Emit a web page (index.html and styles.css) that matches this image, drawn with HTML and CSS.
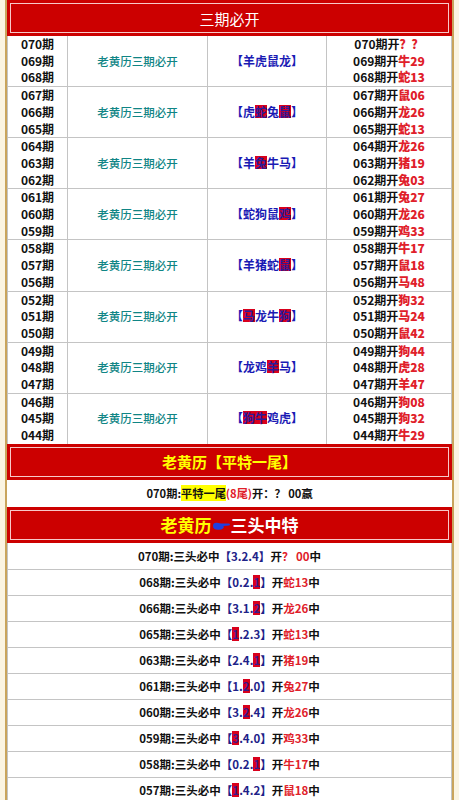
FILE: index.html
```html
<!DOCTYPE html>
<html lang="zh">
<head>
<meta charset="utf-8">
<title>三期必开</title>
<link rel="stylesheet" href="styles.css">
</head>
<body>
<div class="wrap">
  <div class="hd hd-plain">三期必开</div>
  <div class="tbl">
    <div class="grp">
      <div class="c c1">070期<br>069期<br>068期</div>
      <div class="c c2">老黄历三期必开</div>
      <div class="c c3">【羊虎鼠龙】</div>
      <div class="c c4">070期开<b>？？</b><br>069期开<b>牛29</b><br>068期开<b>蛇13</b></div>
    </div>
    <div class="grp">
      <div class="c c1">067期<br>066期<br>065期</div>
      <div class="c c2">老黄历三期必开</div>
      <div class="c c3">【虎<span class="hl">蛇</span>兔<span class="hl">鼠</span>】</div>
      <div class="c c4">067期开<b>鼠06</b><br>066期开<b>龙26</b><br>065期开<b>蛇13</b></div>
    </div>
    <div class="grp">
      <div class="c c1">064期<br>063期<br>062期</div>
      <div class="c c2">老黄历三期必开</div>
      <div class="c c3">【羊<span class="hl">兔</span>牛马】</div>
      <div class="c c4">064期开<b>龙26</b><br>063期开<b>猪19</b><br>062期开<b>兔03</b></div>
    </div>
    <div class="grp">
      <div class="c c1">061期<br>060期<br>059期</div>
      <div class="c c2">老黄历三期必开</div>
      <div class="c c3">【蛇狗鼠<span class="hl">鸡</span>】</div>
      <div class="c c4">061期开<b>兔27</b><br>060期开<b>龙26</b><br>059期开<b>鸡33</b></div>
    </div>
    <div class="grp">
      <div class="c c1">058期<br>057期<br>056期</div>
      <div class="c c2">老黄历三期必开</div>
      <div class="c c3">【羊猪蛇<span class="hl">鼠</span>】</div>
      <div class="c c4">058期开<b>牛17</b><br>057期开<b>鼠18</b><br>056期开<b>马48</b></div>
    </div>
    <div class="grp">
      <div class="c c1">052期<br>051期<br>050期</div>
      <div class="c c2">老黄历三期必开</div>
      <div class="c c3">【<span class="hl">马</span>龙牛<span class="hl">狗</span>】</div>
      <div class="c c4">052期开<b>狗32</b><br>051期开<b>马24</b><br>050期开<b>鼠42</b></div>
    </div>
    <div class="grp">
      <div class="c c1">049期<br>048期<br>047期</div>
      <div class="c c2">老黄历三期必开</div>
      <div class="c c3">【龙鸡<span class="hl">羊</span>马】</div>
      <div class="c c4">049期开<b>狗44</b><br>048期开<b>虎28</b><br>047期开<b>羊47</b></div>
    </div>
    <div class="grp">
      <div class="c c1">046期<br>045期<br>044期</div>
      <div class="c c2">老黄历三期必开</div>
      <div class="c c3">【<span class="hl">狗</span><span class="hl">牛</span>鸡虎】</div>
      <div class="c c4">046期开<b>狗08</b><br>045期开<b>狗32</b><br>044期开<b>牛29</b></div>
    </div>
  </div>

  <div class="hd hd-yel">老黄历【平特一尾】</div>
  <div class="line">070期:<span class="yb">平特一尾</span><span class="red">(8尾)</span>开：？ 00嬴</div>

  <div class="hd hd-big"><span class="yl">老黄历</span><svg class="hand" width="19" height="10" viewBox="0 0 19 10"><path d="M1 5 Q1 1.5 5 1.8 L9 2.6 L17 2.4 Q19 3.4 17 4.6 L11.5 5 Q12.5 6.4 11 7.4 Q9.5 9 6 8.8 Q1 8.8 1 5 Z" fill="#1f3fe0"/></svg><span class="wt">三头中特</span></div>
  <div class="rows">
    <div class="r">070期:三头必中<span class="nv">【3.2.4】</span>开<span class="red">？ 00</span>中</div>
    <div class="r">068期:三头必中<span class="nv">【0.2.<span class="hd2">1</span>】</span>开<span class="red">蛇13</span>中</div>
    <div class="r">066期:三头必中<span class="nv">【3.1.<span class="hd2">2</span>】</span>开<span class="red">龙26</span>中</div>
    <div class="r">065期:三头必中<span class="nv">【<span class="hd2">1</span>.2.3】</span>开<span class="red">蛇13</span>中</div>
    <div class="r">063期:三头必中<span class="nv">【2.4.<span class="hd2">1</span>】</span>开<span class="red">猪19</span>中</div>
    <div class="r">061期:三头必中<span class="nv">【1.<span class="hd2">2</span>.0】</span>开<span class="red">兔27</span>中</div>
    <div class="r">060期:三头必中<span class="nv">【3.<span class="hd2">2</span>.4】</span>开<span class="red">龙26</span>中</div>
    <div class="r">059期:三头必中<span class="nv">【<span class="hd2">3</span>.4.0】</span>开<span class="red">鸡33</span>中</div>
    <div class="r">058期:三头必中<span class="nv">【0.2.<span class="hd2">1</span>】</span>开<span class="red">牛17</span>中</div>
    <div class="r">057期:三头必中<span class="nv">【<span class="hd2">1</span>.4.2】</span>开<span class="red">鼠18</span>中</div>
  </div>
</div>
</body>
</html>
```

FILE: styles.css
```css
html, body {
  margin: 0;
  padding: 0;
}
body {
  background: #fbf4e2;
  font-family: "Noto Sans CJK SC", "Noto Sans", sans-serif;
  color: #111;
}
.wrap {
  margin: 0 5px;
  border-left: 2px solid #c9a45c;
  border-right: 2px solid #c9a45c;
  background: #fff;
}
.hd {
  position: relative;
  background: #cc0000;
  height: 36px;
  display: flex;
  align-items: center;
  justify-content: center;
}
.hd::before {
  content: "";
  position: absolute;
  inset: 3px;
  border: 1px solid rgba(255, 235, 235, 0.85);
  pointer-events: none;
}
.hd-plain {
  color: #fff;
  font-size: 15px;
  font-weight: 400;
}
.hd-yel {
  color: #ffff00;
  font-size: 15px;
  font-weight: 700;
}
.hd-big {
  font-size: 17px;
  font-weight: 700;
  height: 36px;
}
.hd-big .yl { color: #ffff00; }
.hd-big .wt { color: #fff; }
.hand { display: block; margin: 2px 0 0 0; }

.tbl {
  border-left: 1px solid #c4c4c4;
  border-right: 1px solid #c4c4c4;
}
.grp {
  display: grid;
  grid-template-columns: 60px 140px 119px 1fr;
  border-bottom: 1px solid #c4c4c4;
}
.grp:last-child { border-bottom: none; }
.c {
  font-size: 12px;
  line-height: 16.7px;
  text-align: center;
  display: flex;
  flex-direction: column;
  justify-content: center;
  border-right: 1px solid #c4c4c4;
}
.c:last-child { border-right: none; }
.c1 { font-weight: 700; color: #111; display: block; }
.c2 { color: #108585; font-weight: 500; font-size: 11.5px; }
.c3 { color: #1a1ab4; font-weight: 700; display: block; padding-top: 16.7px; }
.c4 { font-weight: 700; display: block; }
.c4 b { color: #e0202a; }
.hl {
  background: #d8001c;
  display: inline-block;
  line-height: 13px;
  color: #2a1a9a;
}

.line {
  height: 27px;
  display: flex;
  align-items: center;
  justify-content: center;
  font-size: 11.2px;
  font-weight: 700;
}
.yb { background: #ffff00; }
.red { color: #e0202a; }

.rows {
  border-left: 1px solid #c4c4c4;
  border-right: 1px solid #c4c4c4;
}
.r {
  height: 25px;
  border-bottom: 1px solid #c4c4c4;
  display: flex;
  align-items: center;
  justify-content: center;
  font-size: 11.5px;
  font-weight: 700;
  white-space: pre;
}
.r:first-child { height: 26px; }
.nv { color: #1e2288; }
.hd2 {
  background: #d8001c;
  display: inline-block;
  line-height: 14px;
  color: #3a1a8a;
}
```
